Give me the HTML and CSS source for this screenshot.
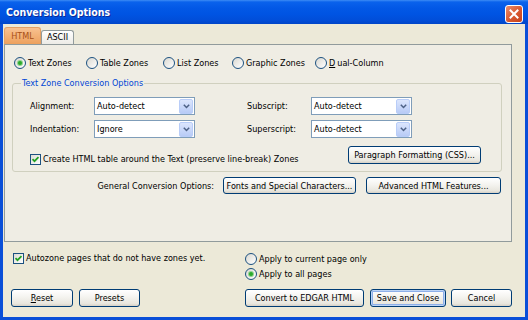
FILE: index.html
```html
<!DOCTYPE html>
<html lang="en">
<head>
  <meta charset="UTF-8" />
  <title>Conversion Options</title>
  <link rel="stylesheet" href="styles.css">
</head>
<body>
  <div class="window">
    <div class="titlebar">
      <span class="title">Conversion Options</span>
      <span class="close">
        <svg width="10" height="10" viewBox="0 0 10 10"><path d="M1.5 1.5L8.5 8.5M8.5 1.5L1.5 8.5" stroke="#fff" stroke-width="2" stroke-linecap="square"/></svg>
      </span>
    </div>
    <div class="client">
      <div class="tabs">
        <div class="tab active">HTML</div>
        <div class="tab">ASCII</div>
      </div>
      <div class="panel">
        <div class="zones">
          <span class="opt"><span class="radio on"></span>Text Zones</span>
          <span class="opt"><span class="radio"></span>Table Zones</span>
          <span class="opt"><span class="radio"></span>List Zones</span>
          <span class="opt"><span class="radio"></span>Graphic Zones</span>
          <span class="opt"><span class="radio"></span><u>D</u>ual-Column</span>
        </div>
        <fieldset class="group">
          <legend>Text Zone Conversion Options</legend>
          <div class="fields">
            <span>Alignment:</span>
            <span class="combo">Auto-detect<span class="drop"><svg width="7" height="5" viewBox="0 0 7 5"><path d="M0.8 0.8L3.5 3.5L6.2 0.8" fill="none" stroke="#4D6185" stroke-width="1.5"/></svg></span></span>
            <span>Subscript:</span>
            <span class="combo">Auto-detect<span class="drop"><svg width="7" height="5" viewBox="0 0 7 5"><path d="M0.8 0.8L3.5 3.5L6.2 0.8" fill="none" stroke="#4D6185" stroke-width="1.5"/></svg></span></span>
            <span>Indentation:</span>
            <span class="combo">Ignore<span class="drop"><svg width="7" height="5" viewBox="0 0 7 5"><path d="M0.8 0.8L3.5 3.5L6.2 0.8" fill="none" stroke="#4D6185" stroke-width="1.5"/></svg></span></span>
            <span>Superscript:</span>
            <span class="combo">Auto-detect<span class="drop"><svg width="7" height="5" viewBox="0 0 7 5"><path d="M0.8 0.8L3.5 3.5L6.2 0.8" fill="none" stroke="#4D6185" stroke-width="1.5"/></svg></span></span>
          </div>
          <div class="table-row">
            <span class="opt table-opt"><span class="check on"><svg width="9" height="9" viewBox="0 0 9 9"><path d="M1.5 4.2L3.5 6.2L7.5 2.2" fill="none" stroke="#21A121" stroke-width="1.7"/></svg></span>Create HTML table around the Text (preserve line-break) Zones</span>
            <button class="btn para">Paragraph Formatting (CSS)...</button>
          </div>
        </fieldset>
        <div class="general">
          <span>General Conversion Options:</span>
          <button class="btn fonts">Fonts and Special Characters...</button>
          <button class="btn advanced">Advanced HTML Features...</button>
        </div>
      </div>
      <div class="footer">
        <span class="opt autozone"><span class="check on"><svg width="9" height="9" viewBox="0 0 9 9"><path d="M1.5 4.2L3.5 6.2L7.5 2.2" fill="none" stroke="#21A121" stroke-width="1.7"/></svg></span>Autozone pages that do not have zones yet.</span>
        <div class="apply">
          <span class="opt"><span class="radio"></span>Apply to current page only</span>
          <span class="opt"><span class="radio on"></span>Apply to all pages</span>
        </div>
        <div class="left-buttons">
          <button class="btn reset"><u>R</u>eset</button>
          <button class="btn presets">Presets</button>
        </div>
        <div class="right-buttons">
          <button class="btn convert">Convert to EDGAR HTML</button>
          <button class="btn save">Save and Close</button>
          <button class="btn cancel">Cancel</button>
        </div>
      </div>
    </div>
  </div>
</body>
</html>
```

FILE: styles.css
```css
* { box-sizing: border-box; }
html, body {
  margin: 0;
}
body {
  width: 528px;
  height: 320px;
  overflow: hidden;
  font-family: "DejaVu Sans Condensed", "DejaVu Sans", sans-serif;
  font-stretch: condensed;
  font-size: 9px;
  color: #000;
  background: #ECE9D8;
}
.window {
  width: 528px;
  height: 320px;
  display: flex;
  flex-direction: column;
}

/* title bar */
.titlebar {
  height: 24px;
  flex: none;
  display: flex;
  justify-content: space-between;
  align-items: flex-start;
  padding: 5px 5px 0 6px;
  background: linear-gradient(#3D8CF5 0, #0A62EC 2px, #0358E6 8px, #0054E3 14px, #014ED9 20px, #0046C8 24px);
}
.title {
  color: #fff;
  font-weight: bold;
  font-size: 10.5px;
  line-height: 14px;
  text-shadow: 1px 1px 0 #0C2A96;
}
.close {
  width: 18px;
  height: 18px;
  display: flex;
  align-items: center;
  justify-content: center;
  border: 1px solid #fff;
  border-radius: 3px;
  background: linear-gradient(135deg, #EA8D6E, #D8572F 55%, #C5421C);
}

/* client area */
.client {
  flex: 1;
  border: 3px solid #0A4FD8;
  border-top: 0;
  padding: 3px 0 0 1px;
  background: #ECE9D8;
}
.tabs {
  display: flex;
  align-items: flex-end;
  height: 17px;
}
.tab {
  width: 33px;
  height: 14px;
  border: 1px solid #919B9C;
  border-bottom: 0;
  border-radius: 3px 3px 0 0;
  background: linear-gradient(#FFFFFF, #ECEBE6);
  text-align: center;
  line-height: 13px;
}
.tab.active {
  width: 37px;
  height: 17px;
  line-height: 16px;
  border-color: #E3A065;
  background: linear-gradient(#F8C190, #EDA15E);
  color: #A84E14;
}
.panel {
  width: 508px;
  height: 198px;
  border: 1px solid #919B9C;
  background: #EFEDE4;
}

/* options */
.opt {
  display: flex;
  align-items: center;
  gap: 2px;
  white-space: nowrap;
  line-height: 12px;
}
.radio {
  flex: none;
  position: relative;
  width: 12px;
  height: 12px;
  border: 1px solid #1C5180;
  border-radius: 50%;
  background: linear-gradient(135deg, #D9D8D1, #FFFFFF);
}
.radio.on::after {
  content: "";
  position: absolute;
  left: 3px;
  top: 3px;
  width: 4px;
  height: 4px;
  border-radius: 50%;
  background: #2BAA2B;
  box-shadow: 0 0 0 1px #8ED28E;
}
.check {
  flex: none;
  display: flex;
  align-items: center;
  justify-content: center;
  width: 11px;
  height: 11px;
  border: 1px solid #1C5180;
  background: linear-gradient(135deg, #DCDBD4, #FFFFFF);
}
.zones {
  display: grid;
  grid-template-columns: 72px 77px 69px 83px auto;
  height: 12px;
  margin: 12px 0 0 9px;
}

/* group box */
.group {
  margin: 8px 9px 0 7px;
  padding: 0 0 6px 0;
  min-width: 0;
  border: 1px solid #D0D0BF;
  border-radius: 3px;
}
.group legend {
  margin-left: 8px;
  padding: 0 1px;
  color: #0046D5;
  line-height: 12px;
}
.fields {
  display: grid;
  grid-template-columns: 64px 153px 64px 101px;
  row-gap: 5px;
  align-items: center;
  margin: 8px 0 0 17px;
}
.combo {
  width: 101px;
  height: 18px;
  display: flex;
  align-items: center;
  justify-content: space-between;
  padding: 0 1px 0 2px;
  border: 1px solid #7F9DB9;
  background: #fff;
}
.drop {
  width: 14px;
  height: 15px;
  display: flex;
  align-items: center;
  justify-content: center;
  border: 1px solid #B9CDF8;
  border-radius: 2px;
  background: linear-gradient(#DCE6FD, #B8CBF6);
}
.table-row {
  display: flex;
  justify-content: space-between;
  height: 19px;
  margin: 8px 20px 0 17px;
}
.table-opt {
  margin-top: 7px;
}

/* buttons */
.btn {
  font: inherit;
  color: #000;
  height: 18px;
  padding: 0;
  border: 1px solid #003C74;
  border-radius: 3px;
  background: linear-gradient(#FFFFFF 0%, #F4F3EF 45%, #E8E6DE 85%, #D6D0C5 100%);
}
.para { width: 133px; }
.general {
  display: flex;
  justify-content: flex-end;
  align-items: center;
  gap: 9px;
  margin: 5px 10px 0 0;
}
.general .btn { height: 17px; }
.fonts { width: 133px; }
.advanced { width: 135px; margin-left: 1px; }

/* footer */
.footer {
  display: grid;
  grid-template-columns: 241px auto;
  margin-top: 10px;
}
.autozone {
  align-self: start;
  margin-left: 9px;
}
.apply {
  display: flex;
  flex-direction: column;
  gap: 3px;
  margin-top: 1px;
}
.left-buttons,
.right-buttons {
  display: flex;
  gap: 6px;
  margin-top: 9px;
}
.left-buttons { margin-left: 7px; }
.reset { width: 62px; }
.presets { width: 61px; }
.convert { width: 119px; }
.save {
  width: 76px;
  box-shadow: inset 0 0 0 1px #BCD4F6, inset 0 0 0 2px #8DAFE9;
}
.cancel { width: 61px; margin-left: -1px; }
```
